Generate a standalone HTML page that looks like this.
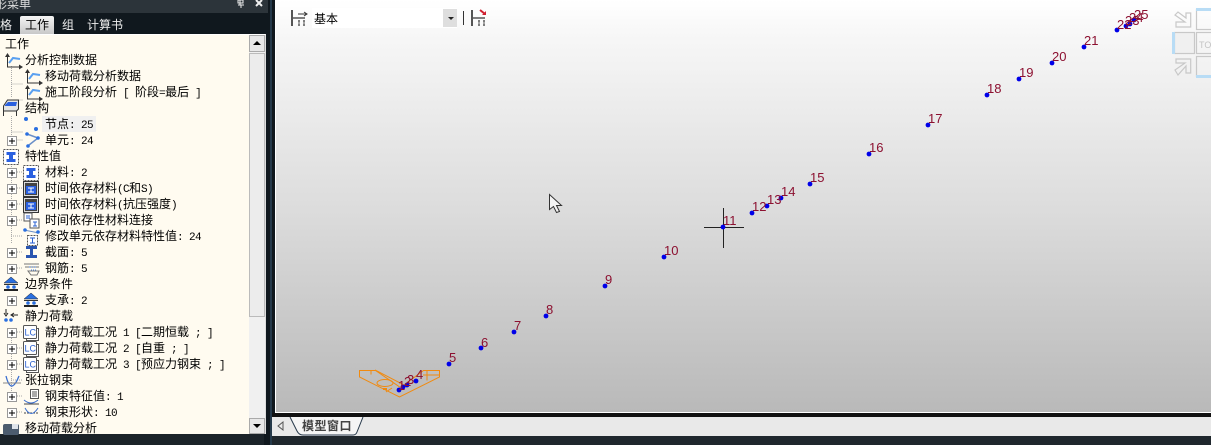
<!DOCTYPE html>
<html lang="zh"><head><meta charset="utf-8"><title>模型窗口</title>
<style>
html,body{margin:0;padding:0}
body{width:1211px;height:445px;position:relative;overflow:hidden;background:#1b2329;font:12px/16px "WenQuanYi Zen Hei","Noto Sans CJK SC",sans-serif;color:#000}
div{position:absolute;box-sizing:border-box}
.r{white-space:pre;height:16px;line-height:16px}
.r i{font:11px/16px "Liberation Mono",monospace;letter-spacing:-.6px}
.tab{top:16px;height:17px;line-height:17px;color:#eee;font-size:12px;white-space:pre}
svg{position:absolute;overflow:visible}
</style></head><body>
<div style="left:0;top:0;width:268px;height:13px;background:#2c343a"></div>
<div style="left:0;top:13px;width:268px;height:21px;background:#10181e"></div>
<div style="left:264px;top:0;width:11px;height:445px;background:#10181e"></div>
<div style="left:0;top:0;width:268px;height:13px;background:#2c343a"></div>
<div style="left:270px;top:0;width:2px;height:445px;background:#25394a"></div>
<div class="tab" style="left:0">格</div>
<div style="left:20px;top:16px;width:34px;height:18px;background:linear-gradient(#f4f4f4,#c8c8c8);border-radius:2px 2px 0 0"></div>
<div class="tab" style="left:25px;color:#000">工作</div>
<div class="tab" style="left:62px">组</div>
<div class="tab" style="left:87px">计算书</div>
<div style="left:-5px;top:-4px;color:#ddd;white-space:pre">形菜单</div>
<svg style="left:0;top:0" width="272" height="13"><path d="M240 0v5M238 0h5v3h-5zM238 5h6M241 5v3" stroke="#eee" fill="none"/><path d="M256 0l6 6M262 0l-6 6" stroke="#eee" stroke-width="2"/></svg>

<div style="left:0;top:34px;width:266px;height:400px;background:#fffbf0;border-top:1px solid #fff;border-right:1px solid #ddd"></div>
<!-- scrollbar -->
<div style="left:249px;top:35px;width:16px;height:399px;background:#f0f0f0"></div>
<div style="left:249px;top:35px;width:16px;height:17px;background:#e8e8e8;border:1px solid #aaa"></div>
<svg style="left:249px;top:35px" width="16" height="17"><path d="M4 10h8l-4-4z" fill="#000"/></svg>
<div style="left:249px;top:53px;width:16px;height:264px;background:#ececec;border:1px solid #bbb"></div>
<div style="left:249px;top:418px;width:16px;height:16px;background:#e8e8e8;border:1px solid #aaa"></div>
<svg style="left:249px;top:418px" width="16" height="16"><path d="M4 6h8l-4 4z" fill="#000"/></svg>
<div style="left:42px;top:116px;width:54px;height:16px;background:#f0f0f0"></div>

<!-- tree lines -->
<svg style="left:0;top:36px" width="250" height="398">
<g stroke="#aaa" stroke-dasharray="1 1" fill="none">
<path d="M11.500 30v32M11.500 48h12M11.500 64h12M11.500 80v24h12M11.500 96h12"/>
<path d="M11.500 128v80M11 136h12M11 152h12M11 168h12M11 184h12M11 200h12M11 216h12M11 232h12"/>
<path d="M11.500 296v64M11 296h12M11 312h12M11 328h12M11 344h12M11 360h12M11 376h12"/>
</g>
<g fill="#fff" stroke="#999">
<rect x="7.500" y="100.500" width="9" height="9"/><rect x="7.500" y="132.500" width="9" height="9"/><rect x="7.500" y="148.500" width="9" height="9"/><rect x="7.500" y="164.500" width="9" height="9"/><rect x="7.500" y="180.500" width="9" height="9"/><rect x="7.500" y="212.500" width="9" height="9"/><rect x="7.500" y="228.500" width="9" height="9"/><rect x="7.500" y="260.500" width="9" height="9"/><rect x="7.500" y="292.500" width="9" height="9"/><rect x="7.500" y="308.500" width="9" height="9"/><rect x="7.500" y="324.500" width="9" height="9"/><rect x="7.500" y="356.500" width="9" height="9"/><rect x="7.500" y="372.500" width="9" height="9"/>
</g>
<path stroke="#000" d="M9 105h6M12 102v6M9 137h6M12 134v6M9 153h6M12 150v6M9 169h6M12 166v6M9 185h6M12 182v6M9 217h6M12 214v6M9 233h6M12 230v6M9 265h6M12 262v6M9 297h6M12 294v6M9 313h6M12 310v6M9 329h6M12 326v6M9 361h6M12 358v6M9 377h6M12 374v6"/>
</svg>

<!-- icons -->
<svg style="left:0;top:0" width="250" height="435">
<defs>
<g id="ax"><path d="M3.500 1v13h14" stroke="#333" fill="none"/><path d="M1 4l2.500-4 2.500 4z" fill="#333"/><path d="M15 11.500l4 2.500-4 2.500z" fill="#333"/><path d="M5 10l4-5 7 1" stroke="#5aa0f0" stroke-width="2" fill="none"/></g>
<g id="mat"><rect x=".5" y=".5" width="15" height="15" fill="#fff" stroke="#555" stroke-dasharray="2 1"/><path d="M3.500 3h9v3H10v4h2.500v3h-9v-3H6V6H3.500z" fill="#2a60e0"/></g>
<g id="dark"><rect x=".5" y=".5" width="15" height="15" fill="#ddd" stroke="#333"/><rect x="2" y="2" width="12" height="12" fill="#444"/><rect x="3" y="5" width="10" height="8" fill="#2a60e0"/><path d="M5 7h6M5 11h6M8 7v4" stroke="#fff"/></g>
<g id="lc"><rect x="3.500" y="3.500" width="12" height="12" fill="#fff" stroke="#555"/><rect x=".5" y=".5" width="13" height="13" rx="1" fill="#fff" stroke="#555"/><text x="1.500" y="10.500" font-family="Liberation Sans,sans-serif" font-size="9" fill="#2a60d0">LC</text></g>
<g id="sup"><path d="M8 0l7 6H1z" fill="#2a6fe0" stroke="#222" stroke-width=".5"/><path d="M1 7h14v1H1z" fill="#333"/><circle cx="5" cy="10" r="1.800" fill="#2a6fe0"/><circle cx="11" cy="10" r="1.800" fill="#2a6fe0"/><path d="M1 12h14v2H1z" fill="#222"/></g>
</defs>
<use href="#ax" x="4" y="53"/><use href="#ax" x="24" y="69"/><use href="#ax" x="24" y="85"/>
<path d="M3.500 106l4-6h11v9l-2 2h-13z" fill="#e4e4e4" stroke="#333"/><path d="M5 105l3-3h9l-1 4H5z" fill="#2a60e0"/><path d="M3.500 111v5M16.500 111v5" stroke="#333"/>
<circle cx="26" cy="119" r="2" fill="#2a6fe0"/><circle cx="36" cy="129" r="2" fill="#2a6fe0"/>
<path d="M27 134l11 4-9 7" stroke="#6a8fc8" stroke-width="1.500" fill="none"/><circle cx="27" cy="134" r="1.800" fill="#2a6fe0"/><circle cx="38" cy="138" r="1.800" fill="#2a6fe0"/><circle cx="28" cy="146" r="1.800" fill="#2a6fe0"/>
<use href="#mat" x="3" y="149"/><use href="#mat" x="23" y="165"/><use href="#dark" x="23" y="181"/><use href="#dark" x="23" y="197"/>
<g transform="translate(23 212)"><rect x="1" y="1" width="8" height="8" fill="#fff" stroke="#555"/><rect x="7" y="7" width="9" height="9" fill="#fff" stroke="#555"/><path d="M3 4h4M3 6h4M10 10h4M12 10v4M10 14h4" stroke="#2a60d0"/></g>
<g transform="translate(23 228)"><path d="M1 2l5 1 10 2" stroke="#6a8fc8" fill="none"/><circle cx="2" cy="2" r="1.800" fill="#2a6fe0"/><circle cx="15" cy="4" r="1.800" fill="#2a6fe0"/><rect x="4.500" y="7.500" width="10" height="10" fill="#fff" stroke="#555" stroke-dasharray="2 1"/><path d="M7 10h5M9.500 10v5M7 15h5" stroke="#2a60d0"/></g>
<path d="M26 246h11v3h-4v6h4v3H26v-3h4v-6h-4z" fill="#2a55b0"/>
<g transform="translate(23 263)" fill="none" stroke="#777"><path d="M1 1h15M2 4h14M5 8h11l-2 4H8z"/><path d="M6 4h7M8 7h5" stroke="#4a80e0" stroke-dasharray="1 1"/></g>
<use href="#sup" x="3" y="277"/><use href="#sup" x="23" y="293"/>
<g transform="translate(3 309)"><path d="M3 0v5M1 4l2 3 2-3M15 6H9M11 4l-3 2 3 2" stroke="#222" fill="none"/><circle cx="3" cy="11" r="1.800" fill="#2a6fe0"/><circle cx="8" cy="11" r="1.800" fill="#2a6fe0"/></g>
<use href="#lc" x="23" y="325"/><use href="#lc" x="23" y="341"/><use href="#lc" x="23" y="357"/>
<g transform="translate(3 375)"><path d="M3 1q5 20 13 0" stroke="#3a6fd0" fill="none" stroke-width="1.300"/><path d="M0 8h18" stroke="#888"/></g>
<g transform="translate(23 389)"><rect x="7.500" y=".5" width="8" height="9" fill="#fff" stroke="#555"/><path d="M9 3h5M9 5h5M9 7h5" stroke="#555"/><path d="M1 11q7 6 14 0" stroke="#3a6fd0" fill="none"/><path d="M1 15h15" stroke="#444"/></g>
<g transform="translate(23 405)"><path d="M1 8h15" stroke="#444" stroke-dasharray="2 1"/><path d="M2 3q6 11 13 0" stroke="#3a6fd0" fill="none"/></g>
<g transform="translate(3 421)"><rect x="0" y="3" width="16" height="11" rx="2" fill="#4c5c6e"/><rect x="9" y="3" width="6" height="5" fill="#dfe4ea"/></g>
</svg>

<div class="r" style="left:5px;top:36px">工作</div>
<div class="r" style="left:25px;top:52px">分析控制数据</div>
<div class="r" style="left:45px;top:68px">移动荷载分析数据</div>
<div class="r" style="left:45px;top:84px">施工阶段分析<i> [ </i>阶段<i>=</i>最后<i> ]</i></div>
<div class="r" style="left:25px;top:100px">结构</div>
<div class="r" style="left:45px;top:116px">节点<i>: 25</i></div>
<div class="r" style="left:45px;top:132px">单元<i>: 24</i></div>
<div class="r" style="left:25px;top:148px">特性值</div>
<div class="r" style="left:45px;top:164px">材料<i>: 2</i></div>
<div class="r" style="left:45px;top:180px">时间依存材料<i>(C</i>和<i>S)</i></div>
<div class="r" style="left:45px;top:196px">时间依存材料<i>(</i>抗压强度<i>)</i></div>
<div class="r" style="left:45px;top:212px">时间依存性材料连接</div>
<div class="r" style="left:45px;top:228px">修改单元依存材料特性值<i>: 24</i></div>
<div class="r" style="left:45px;top:244px">截面<i>: 5</i></div>
<div class="r" style="left:45px;top:260px">钢筋<i>: 5</i></div>
<div class="r" style="left:25px;top:276px">边界条件</div>
<div class="r" style="left:45px;top:292px">支承<i>: 2</i></div>
<div class="r" style="left:25px;top:308px">静力荷载</div>
<div class="r" style="left:45px;top:324px">静力荷载工况<i> 1 [</i>二期恒载<i> ; ]</i></div>
<div class="r" style="left:45px;top:340px">静力荷载工况<i> 2 [</i>自重<i> ; ]</i></div>
<div class="r" style="left:45px;top:356px">静力荷载工况<i> 3 [</i>预应力钢束<i> ; ]</i></div>
<div class="r" style="left:25px;top:372px">张拉钢束</div>
<div class="r" style="left:45px;top:388px">钢束特征值<i>: 1</i></div>
<div class="r" style="left:45px;top:404px">钢束形状<i>: 10</i></div>
<div class="r" style="left:25px;top:420px">移动荷载分析</div>

<!-- viewport -->
<div style="left:275px;top:0;width:936px;height:412px;background:linear-gradient(#ffffff,#f6f6f6 40px,#dcdcdc 210px,#b9b9b9 412px);border-left:1px solid #fff"></div>
<div style="left:275px;top:412px;width:936px;height:1px;background:#fff"></div>
<div style="left:272px;top:413px;width:939px;height:4px;background:#111"></div>
<div style="left:272px;top:417px;width:939px;height:19px;background:#e9e9e9"></div>
<div style="left:272px;top:436px;width:939px;height:9px;background:#1f272d"></div>

<!-- toolbar -->
<div style="left:312px;top:8px;width:145px;height:20px;background:#fff"></div>
<div style="left:443px;top:9px;width:14px;height:18px;background:#dedede"></div>
<div class="r" style="left:314px;top:11px;font-size:12px">基本</div>
<svg style="left:0;top:0" width="1211" height="445">
<path d="M448 17h6l-3 3z" fill="#222"/>
<path d="M463.500 11v14" stroke="#333"/>
<g fill="none" stroke="#555"><path d="M292 10v16" stroke-width="2"/><path d="M293 18h12" stroke-width="1.500"/><path d="M299 20v6M304 20v6M298 21h2M303 21h2M298 25h2M303 25h2"/><path d="M298 14h9M304 12l3 2-3 2" stroke="#333"/></g>
<g fill="none" stroke="#555"><path d="M472 10v16" stroke-width="2"/><path d="M473 18h12" stroke-width="1.500"/><path d="M479 20v6M484 20v6M478 21h2M483 21h2M478 25h2M483 25h2"/></g>
<path d="M480 10l5 4" stroke="#d02030" stroke-width="2"/><path d="M482 15h4v-4z" fill="#d02030"/>

<!-- nav cube -->
<g fill="none" stroke="#c8c8c8" stroke-width="1.200">
<path d="M1175 15l3-3 8 6v-5h4.700v14H1176v-5h9z"/>
<path d="M1176 59h14.700v14H1186v-7l-8 9-3-5 10-7h-9z"/>
<rect x="1174.500" y="32.500" width="20" height="21" fill="#f0f0f0"/>
<rect x="1196.500" y="32.500" width="18" height="21"/>
<rect x="1196.500" y="9.500" width="18" height="20"/>
<rect x="1196.500" y="56.500" width="18" height="20"/>
</g>
<rect x="1172" y="32" width="3" height="22" fill="#b8dcf5"/>
<rect x="1196" y="8" width="15" height="3" fill="#b8dcf5"/>
<rect x="1196" y="75" width="15" height="3" fill="#b8dcf5"/>
<text x="1199" y="48" font-family="Liberation Sans,sans-serif" font-size="9" fill="#c4c4c4">TOP</text>

<!-- orange model -->
<g fill="none" stroke="#f08a10" stroke-width="1">
<path d="M359.500 370.500v6.500l40 20 40-20v-6.500h-16l-23 17-25-17z"/>
<path d="M359.500 370.500h16M371 370.500v4M423 370.500h16M427 370.500v10M423 375h16"/>
<ellipse cx="385" cy="383" rx="8" ry="3.500"/>
<path d="M375 370l29 15M386 392l6-4"/>
</g>
<rect x="383" y="388" width="4" height="2" fill="#f08a10"/>

<!-- crosshair -->
<path d="M704 227.500h40M723.500 208v40" stroke="#222"/>

<g fill="#0000e8">
<circle cx="399" cy="390" r="2.400"/><circle cx="403" cy="387" r="2.400"/><circle cx="407" cy="385" r="2.400"/><circle cx="416" cy="381" r="2.400"/><circle cx="449" cy="364" r="2.400"/><circle cx="481" cy="348" r="2.400"/><circle cx="514" cy="332" r="2.400"/><circle cx="546" cy="316" r="2.400"/><circle cx="605" cy="286" r="2.400"/><circle cx="664" cy="257" r="2.400"/><circle cx="723" cy="227" r="2.400"/><circle cx="752" cy="213" r="2.400"/><circle cx="767" cy="206" r="2.400"/><circle cx="781" cy="198" r="2.400"/><circle cx="810" cy="184" r="2.400"/><circle cx="869" cy="154" r="2.400"/><circle cx="928" cy="125" r="2.400"/><circle cx="987" cy="95" r="2.400"/><circle cx="1019" cy="79" r="2.400"/><circle cx="1052" cy="63" r="2.400"/><circle cx="1084" cy="47" r="2.400"/><circle cx="1117" cy="30" r="2.400"/><circle cx="1126" cy="26" r="2.400"/><circle cx="1130" cy="24" r="2.400"/><circle cx="1134" cy="20" r="2.400"/>
</g>
<g font-family="Liberation Sans,sans-serif" font-size="13" fill="#8c1030">
<text x="398" y="390">1</text><text x="404" y="386">2</text><text x="407" y="384">3</text><text x="416" y="379">4</text><text x="449" y="362">5</text><text x="481" y="347">6</text><text x="514" y="330">7</text><text x="546" y="314">8</text><text x="605" y="284">9</text><text x="664" y="255">10</text><text x="723" y="225">11</text><text x="752" y="211">12</text><text x="767" y="204">13</text><text x="781" y="196">14</text><text x="810" y="182">15</text><text x="869" y="152">16</text><text x="928" y="123">17</text><text x="987" y="93">18</text><text x="1019" y="77">19</text><text x="1052" y="61">20</text><text x="1084" y="45">21</text><text x="1117" y="29">22</text><text x="1125" y="25">23</text><text x="1129" y="22">24</text><text x="1134" y="19">25</text>
</g>

<!-- cursor -->
<path d="M549.500 194.500v15l4-3 3 6 3-1-3-6h5z" fill="#f4f4f4" stroke="#333" stroke-width="1"/>

<!-- tab strip -->
<path d="M283 422l-5 4 5 4z" fill="none" stroke="#555"/>
<path d="M290 417l7 14q2 4 6 4h50q3 0 4-3l6-15" fill="#f5f5f5" stroke="#26384a"/>
</svg>
<div class="r" style="left:302px;top:418px;font-weight:bold;color:#444;letter-spacing:.5px">模型窗口</div>
</body></html>
